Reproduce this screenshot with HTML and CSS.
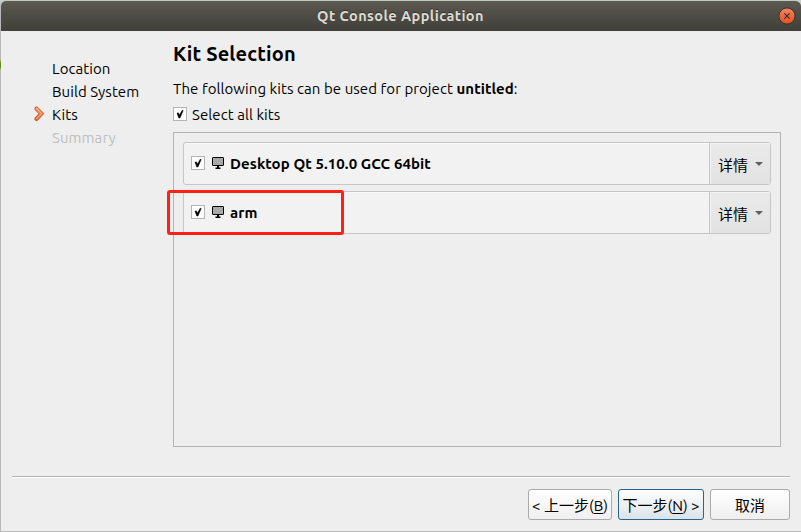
FILE: index.html
```html
<!DOCTYPE html>
<html lang="zh-CN">
<head>
<meta charset="utf-8">
<title>Qt Console Application</title>
<link rel="stylesheet" href="styles.css">
</head>
<body>
<svg class="defs" aria-hidden="true">
  <symbol id="check" viewBox="0 0 14 14">
    <rect x=".5" y=".5" width="13" height="13" fill="#fff" stroke="#b4b4b4"/>
    <path d="M4 6.2L5.3 5.8L6.5 8L9.2 3.2L10.2 3.6L7 11L5.8 11Z" fill="#000" stroke="#000" stroke-width=".5"/>
  </symbol>
  <symbol id="monitor" viewBox="0 0 13 13">
    <rect x=".5" y=".5" width="11" height="8" rx=".4" fill="#a9a9a9" stroke="#000"/>
    <path d="M5 9H7V10.5H8.5V12H3.5V10.5H5Z" fill="#000"/>
  </symbol>
</svg>
<div class="window">
  <header class="titlebar">
    <span class="caption">Qt Console Application</span>
    <svg class="close" viewBox="0 0 18 18">
      <defs><linearGradient id="orange" x1="0" y1="0" x2="0" y2="1"><stop offset="0" stop-color="#f38461"/><stop offset="1" stop-color="#e5501f"/></linearGradient></defs>
      <circle cx="9" cy="9" r="8.1" fill="url(#orange)" stroke="#34332e" stroke-width="1"/>
      <path d="M6.4 6.4L11.6 11.6M11.6 6.4L6.4 11.6" stroke="#3b2e25" stroke-width="1.2"/>
    </svg>
  </header>
  <main class="wizard">
    <nav class="steps">
      <div class="step">Location</div>
      <div class="step">Build System</div>
      <div class="step step-current">
        <svg class="arrow" viewBox="0 0 11 16">
          <defs><linearGradient id="chev" x1="0" y1="0" x2="0" y2="1"><stop offset="0" stop-color="#f3a878"/><stop offset="1" stop-color="#e9602c"/></linearGradient></defs>
          <path d="M1 1.5L3 .8L9.8 7.5L3 14.8L1 14L1 12L5 7.6L1 3.7Z" fill="url(#chev)" stroke="#d4532b" stroke-width="1" stroke-linejoin="round"/>
          <path d="M2.4 2.4L7.4 7.5L2.4 13" fill="none" stroke="#fbc49b" stroke-width=".8"/>
        </svg>
        <span>Kits</span>
      </div>
      <div class="step step-disabled">Summary</div>
    </nav>
    <section class="page">
      <h1>Kit Selection</h1>
      <p class="intro">The following kits can be used for project <b>untitled</b>:</p>
      <div class="select-all"><svg class="box"><use href="#check"/></svg><span>Select all kits</span></div>
      <div class="kit-list">
        <div class="kit">
          <div class="kit-name"><svg class="box"><use href="#check"/></svg><svg class="monitor"><use href="#monitor"/></svg><span>Desktop Qt 5.10.0 GCC 64bit</span></div>
          <div class="details"><span>详情</span><i class="caret"></i></div>
        </div>
        <div class="kit">
          <div class="kit-name"><svg class="box"><use href="#check"/></svg><svg class="monitor"><use href="#monitor"/></svg><span>arm</span></div>
          <div class="details"><span>详情</span><i class="caret"></i></div>
          <div class="highlight"></div>
        </div>
      </div>
    </section>
  </main>
  <footer class="actions">
    <div class="button back">&lt; 上一步(<u>B</u>)</div>
    <div class="button next">下一步(<u>N</u>) &gt;</div>
    <div class="button cancel">取消</div>
  </footer>
</div>
<div class="backdrop-spot"></div>
</body>
</html>
```
FILE: styles.css
```css
* { box-sizing: border-box; }
body {
  margin: 0;
  width: 801px;
  height: 532px;
  overflow: hidden;
  background: #c9cdc8;
  color: #000;
  font: 15px/23px Ubuntu, "Noto Sans", "Noto Sans CJK SC", sans-serif;
  letter-spacing: .07px;
  white-space: nowrap;
}
svg { display: block; flex: none; }
.defs { position: absolute; width: 0; height: 0; }
.window {
  height: 532px;
  border: solid #b9b9b9;
  border-width: 1px 0 1px 1px;
  border-top-color: #c3c9c2;
  border-radius: 6px 6px 0 0;
  background: #eee;
  display: flex;
  flex-direction: column;
  overflow: hidden;
}
.backdrop-spot {
  position: absolute;
  left: 0;
  top: 60px;
  width: 1px;
  height: 10px;
  background: linear-gradient(#c5b64a, #5d8a35 30%, #5d8a35 70%, #c5b64a);
}
.titlebar {
  height: 30px;
  flex: none;
  display: grid;
  grid-template-columns: 1fr auto 1fr;
  align-items: center;
  padding-right: 5px;
  background: linear-gradient(#5b5950, #403f3a);
  color: #dfdbd2;
  font-weight: 600;
  font-size: 14.5px;
  letter-spacing: .43px;
  text-shadow: 0 -1px #33322e;
}
.caption { grid-column: 2; padding-left: 4px; margin-top: -2px; }
.close { width: 18px; height: 18px; justify-self: end; }
.wizard { display: flex; height: 445px; flex: none; }
.steps { width: 172px; padding: 26px 0 0 51px; }
.step { height: 23px; }
.step-current { display: flex; margin-left: -18px; gap: 7px; align-items: center; }
.arrow { width: 11px; height: 16px; margin-top: -2px; }
.step-disabled { color: #bebebe; }
.page { width: 608px; padding-top: 9px; }
h1 { margin: 0; font-size: 20px; line-height: 28px; font-weight: 700; letter-spacing: .17px; }
.intro { margin: 9px 0 0; }
.select-all { display: flex; align-items: center; gap: 5px; height: 23px; margin-top: 3px; }
.box { width: 14px; height: 14px; margin-top: -1px; }
.kit-list {
  height: 315px;
  margin-top: 6px;
  border: 1px solid #b4b4b4;
  padding: 9px;
  display: flex;
  flex-direction: column;
  gap: 6px;
}
.kit {
  position: relative;
  display: flex;
  height: 43px;
  border: 1px solid #c6c6c6;
  border-radius: 3px;
  background: #f2f2f2;
  box-shadow: inset 0 1px #f9f9f9;
}
.kit-name { flex: 1; display: flex; align-items: center; padding-left: 7px; font-weight: 700; letter-spacing: .08px; }
.monitor { width: 13px; height: 13px; margin: 0 5px 0 7px; }
.details {
  width: 61px;
  display: flex;
  align-items: center;
  padding: 4px 0 0 8px;
  border-left: 1px solid #c6c6c6;
  border-radius: 0 2px 2px 0;
  background: linear-gradient(#eaeaea, #e2e2e2);
  box-shadow: inset 1px 1px #f2f2f2;
  letter-spacing: 0;
}
.caret { border: 4px solid transparent; border-top-color: #606060; border-bottom: 0; margin: -4px 0 0 7px; }
.highlight {
  position: absolute;
  left: -17px;
  top: -2px;
  width: 177px;
  height: 45px;
  border: 3px solid #ff2114;
  border-radius: 3px;
}
.actions {
  height: 55px;
  margin: 0 11px 0 11px;
  border-top: 1px solid #b4b4b4;
  box-shadow: inset 0 1px #fff;
  padding-top: 12px;
  display: flex;
  justify-content: flex-end;
  gap: 6px;
}
.button {
  height: 31px;
  line-height: 32px;
  text-align: center;
  border: 1px solid #aaa;
  border-radius: 3px;
  background: linear-gradient(#fff, #efefef);
  letter-spacing: 0;
}
.button u { text-underline-offset: 2px; }
.back { width: 84px; }
.next { width: 86px; border-color: #24658e; background: linear-gradient(#fff, #dbe3e9); }
.cancel { width: 80px; }
```
